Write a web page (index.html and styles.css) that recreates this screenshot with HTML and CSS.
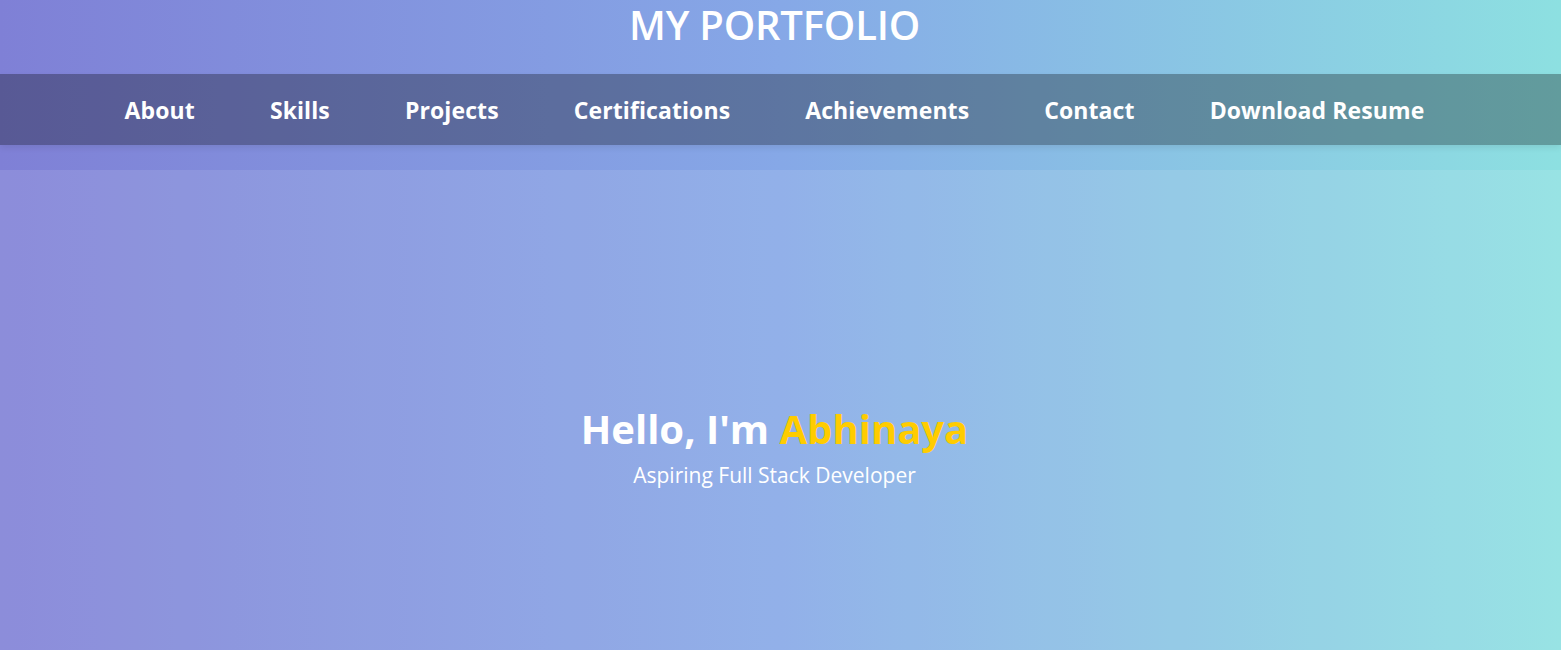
FILE: index.html
```html
<!DOCTYPE html>
<html lang="en">
<head>
<meta charset="utf-8">
<title>My Portfolio</title>
<link rel="stylesheet" href="styles.css">
</head>
<body>
<header class="site-header">
  <h1 class="site-title">MY PORTFOLIO</h1>
  <nav class="main-nav">
    <ul class="nav-list">
      <li><a href="#about">About</a></li>
      <li><a href="#skills">Skills</a></li>
      <li><a href="#projects">Projects</a></li>
      <li><a href="#certifications">Certifications</a></li>
      <li><a href="#achievements">Achievements</a></li>
      <li><a href="#contact">Contact</a></li>
      <li><a href="#resume">Download Resume</a></li>
    </ul>
  </nav>
</header>
<section class="hero">
  <div class="hero-inner">
    <h2 class="hero-title">Hello, I'm <span class="hero-name">Abhinaya</span></h2>
    <p class="hero-sub">Aspiring Full Stack Developer</p>
  </div>
</section>
</body>
</html>
```

FILE: styles.css
```css
* { box-sizing: border-box; }
html, body { margin: 0; padding: 0; }
body {
  font-family: "Open Sans", "Noto Sans", sans-serif;
  color: #fff;
  background: linear-gradient(to right, #7f80d6, #86a8e7, #8de0e1);
  min-height: 650px;
  overflow: hidden;
}
.site-header {
  height: 170px;
  background: linear-gradient(to right, #7f80d6, #86a8e7, #8de0e1);
  display: flex;
  flex-direction: column;
  padding-right: 12px;
}
.site-title {
  margin: 0;
  height: 74px;
  text-align: center;
  font-size: 40px;
  font-weight: 600;
  line-height: 50px;
  letter-spacing: -0.2px;
}
.main-nav {
  height: 71px;
  margin-right: -12px;
  padding-right: 12px;
  background: rgba(0, 0, 0, 0.3);
  box-shadow: 0 3px 6px rgba(0, 0, 0, 0.08);
}
.nav-list {
  list-style: none;
  margin: 0;
  padding: 0;
  height: 100%;
  display: flex;
  justify-content: center;
  align-items: center;
  gap: 75px;
}
.nav-list a {
  color: #fff;
  text-decoration: none;
  font-size: 23px;
  font-weight: 700;
  letter-spacing: 0.1px;
}
.hero {
  height: 480px;
  background: rgba(255, 255, 255, 0.1);
  display: flex;
  align-items: center;
  justify-content: center;
  padding: 0 12px 0 0;
}
.hero-inner {
  text-align: center;
  margin-top: 74px;
}
.hero-title {
  margin: 0;
  font-size: 40px;
  font-weight: 700;
  line-height: 48px;
}
.hero-name { color: #ffcc00; }
.hero-sub {
  margin: 8px 0 0;
  font-size: 21px;
  line-height: 28px;
}
```
